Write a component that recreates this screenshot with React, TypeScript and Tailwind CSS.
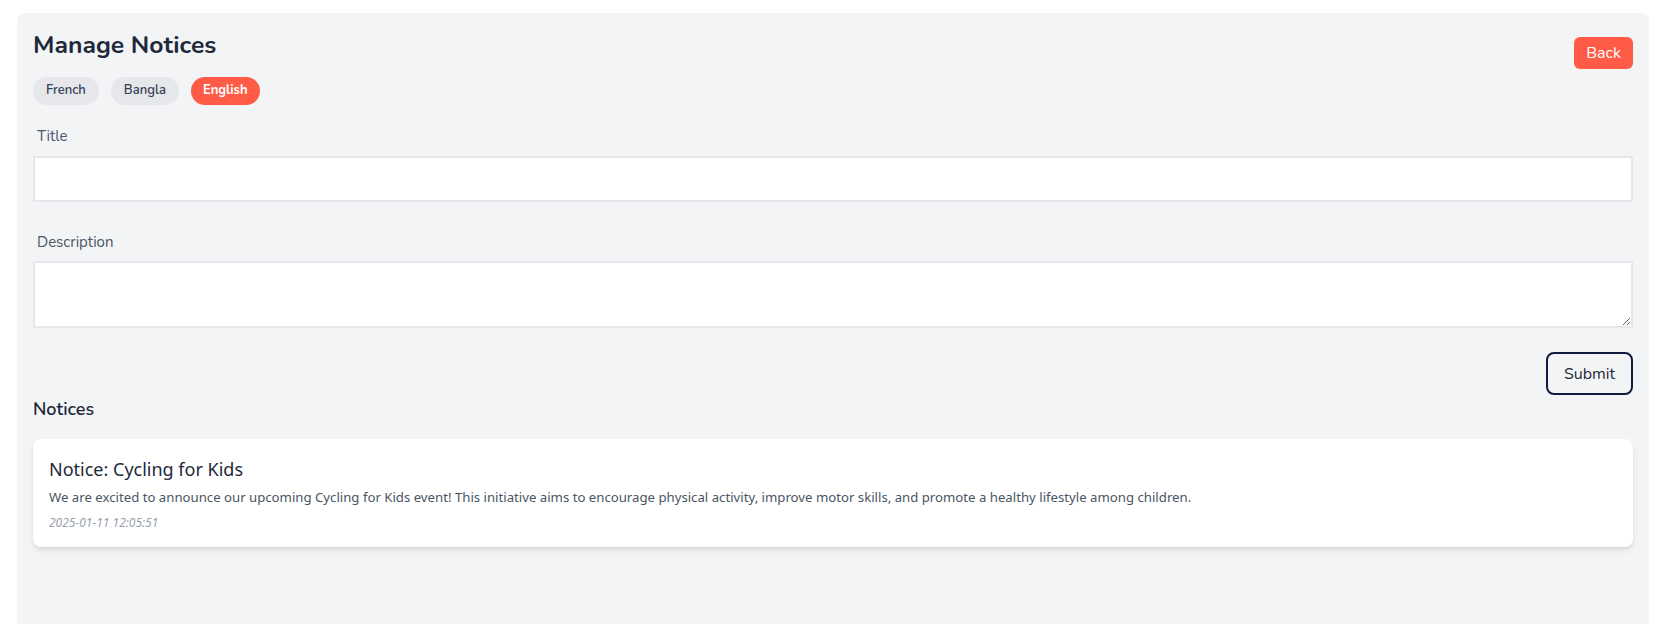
import { FC } from 'react';

const nunito = { fontFamily: 'Nunito, Lato, "Open Sans", sans-serif' };

const LangPill: FC<{ label: string; active?: boolean }> = ({ label, active }) => (
    <button
        className={
            active
                ? 'h-7 px-3 rounded-full bg-[#ff5b47] text-white text-[13px] font-bold'
                : 'h-7 px-[13px] rounded-full bg-gray-200 text-gray-700 text-[13px] font-semibold'
        }
    >
        {label}
    </button>
);

const App: FC = () => {
    return (
        <div className="min-h-screen bg-white px-[17px] pt-[13px]" style={nunito}>
            <div className="h-[611px] rounded-t-lg bg-gray-100 p-4">
                <div className="flex justify-between items-start">
                    <div>
                        <h1 className="text-[24.7px] leading-8 font-bold text-gray-800">Manage Notices</h1>
                        <div className="mt-4 flex gap-3">
                            <LangPill label="French" />
                            <LangPill label="Bangla" />
                            <LangPill label="English" active />
                        </div>
                    </div>
                    <button className="mt-2 h-8 px-3 rounded-md bg-[#ff5b47] text-white text-base">
                        Back
                    </button>
                </div>

                <form className="mt-5">
                    <label className="block px-1 text-[15px] text-gray-600">Title</label>
                    <input className="mt-2 block w-full h-[46px] bg-white border-2 border-gray-200 outline-none px-3" />

                    <label className="mt-[29px] block px-1 text-[15px] text-gray-600">Description</label>
                    <textarea className="mt-2 block w-full h-[67px] bg-white border-2 border-gray-200 outline-none px-3" />

                    <div className="mt-6 flex justify-end">
                        <button
                            type="button"
                            className="h-[43px] w-[87px] rounded-lg border-2 border-[#0f1a3d] text-[16px] text-gray-800"
                        >
                            Submit
                        </button>
                    </div>
                </form>

                <h2 className="text-[18px] leading-7 font-semibold text-gray-800">Notices</h2>

                <div className="mt-4 rounded-lg bg-white shadow-md px-4 pt-4 pb-4" style={{ fontFamily: '"Noto Sans", "Open Sans", sans-serif' }}>
                    <h3 className="text-[18px] leading-7 text-gray-800">Notice: Cycling for Kids</h3>
                    <p className="mt-1 text-[13.2px] leading-5 text-gray-600">
                        We are excited to announce our upcoming Cycling for Kids event! This initiative aims to encourage physical activity, improve motor skills, and promote a healthy lifestyle among children.
                    </p>
                    <p className="mt-2 text-[12px] leading-4 italic text-gray-400">2025-01-11 12:05:51</p>
                </div>
            </div>
        </div>
    );
};

export default App;
